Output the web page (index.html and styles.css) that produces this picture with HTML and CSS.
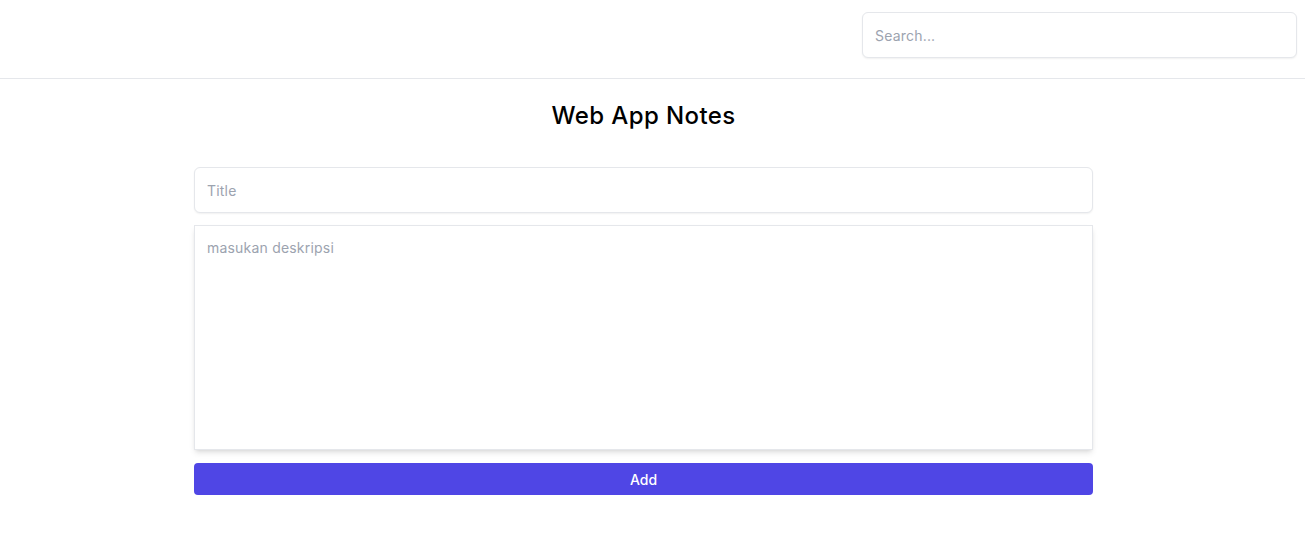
FILE: index.html
```html
<!DOCTYPE html>
<html lang="id">
<head>
<meta charset="utf-8">
<title>Web App Notes</title>
<link rel="stylesheet" href="styles.css">
</head>
<body>
<header class="topbar">
  <input class="search" type="text" placeholder="Search...">
</header>
<main class="main">
  <div class="content">
    <h1 class="heading">Web App Notes</h1>
    <form class="note-form">
      <input class="field title-field" type="text" placeholder="Title">
      <textarea class="field desc-field" placeholder="masukan deskripsi"></textarea>
      <button class="add-btn" type="button">Add</button>
    </form>
  </div>
</main>
</body>
</html>
```
FILE: styles.css
```css
* { box-sizing: border-box; }
body {
  margin: 0;
  font-family: Inter, "Noto Sans", sans-serif;
  color: #111;
  background: #fff;
}
.topbar {
  height: 79px;
  border-bottom: 1px solid #e5e7eb;
  display: flex;
  justify-content: flex-end;
  align-items: flex-start;
  padding: 12px 8px 0 0;
}
.search {
  width: 435px;
  height: 46px;
  border: 1px solid #e5e7eb;
  border-radius: 6px;
  box-shadow: 0 1px 2px rgba(0,0,0,0.06);
  padding: 0 12px;
  font-family: inherit;
  font-size: 14px;
  letter-spacing: 0.2px;
  outline: none;
}
::placeholder { color: #9ca3af; opacity: 1; }
.main {
  display: flex;
  justify-content: center;
  padding-right: 18px;
}
.content { width: 899px; }
.heading {
  margin: 20px 0 0;
  text-align: center;
  font-size: 24px;
  font-weight: 500;
  letter-spacing: 0.4px;
  line-height: 34px;
  color: #000;
}
.note-form {
  margin-top: 34px;
  display: flex;
  flex-direction: column;
}
.field {
  width: 100%;
  border: 1px solid #e5e7eb;
  font-family: inherit;
  font-size: 14px;
  letter-spacing: 0.2px;
  color: #111;
  outline: none;
  padding: 12px;
}
.title-field {
  height: 46px;
  border-radius: 6px;
  box-shadow: 0 1px 2px rgba(0,0,0,0.06);
}
.desc-field {
  margin-top: 12px;
  height: 225px;
  resize: none;
  border-radius: 0;
  padding-top: 13px;
  box-shadow: 0 4px 6px -1px rgba(0,0,0,0.1), 0 2px 4px -2px rgba(0,0,0,0.1);
}
.add-btn {
  margin-top: 13px;
  height: 32px;
  border: none;
  border-radius: 4px;
  background: #4f46e5;
  color: #fff;
  font-family: inherit;
  font-size: 14px;
  font-weight: 500;
  cursor: pointer;
}
```
